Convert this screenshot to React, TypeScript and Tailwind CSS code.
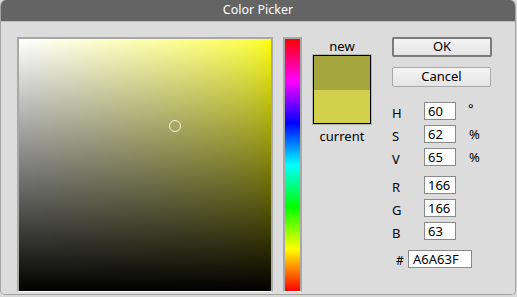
import React from "react";

const font = { fontFamily: '"Noto Sans", "Open Sans", sans-serif' };

function Field({ label, value, unit, unitClass }: { label: string; value: string; unit?: string; unitClass?: string }) {
  return (
    <div className="flex h-[18px] items-start">
      <div className="w-[32px] pt-[2px] text-[13px] leading-[18px] text-black">{label}</div>
      <div className="h-[18px] w-[32px] border border-[#8a8a8a] bg-white pl-[3px] text-[13px] leading-[16px] text-black">
        {value}
      </div>
      {unit && <div className={"ml-[12px] text-[13px] text-black " + (unitClass ?? "")}>{unit}</div>}
    </div>
  );
}

export default function App() {
  return (
    <div className="h-[297px] w-[517px] bg-[#d8d8d8]" style={font}>
      <div className="flex h-[295px] w-[516px] flex-col overflow-hidden rounded-t-[6px] rounded-b-[5px] border-x border-b border-[#a2a2a2]">
        <div className="flex h-[21px] shrink-0 items-center justify-center bg-[#646464] text-[12.5px] text-white">
          Color Picker
        </div>
        <div className="flex flex-1 border-t border-[#bdbdbd] bg-[#dcdcdc] pl-[16px] pt-[15px]">
          {/* saturation / value square */}
          <div className="h-[255px] w-[256px] border-x-2 border-t-2 border-b border-[#a8a8a8] border-b-white">
            <div className="relative h-[252px] w-[252px] bg-gradient-to-r from-white to-[#ffff00]">
              <div className="absolute inset-0 bg-gradient-to-b from-transparent to-black" />
              <div className="absolute left-[150px] top-[81px] h-[12px] w-[12px] rounded-full border-[1.5px] border-[#f4f4e0]" />
            </div>
          </div>
          {/* hue bar */}
          <div className="ml-[10px] h-[255px] w-[19px] border-x-2 border-t-2 border-b border-[#a8a8a8] border-b-white">
            <div className="h-[252px] w-[15px] bg-[linear-gradient(to_bottom,#ff0000,#ff00ff,#0000ff,#00ffff,#00ff00,#ffff00,#ff0000)]" />
          </div>
          {/* preview */}
          <div className="ml-[11px] flex w-[58px] flex-col items-center">
            <div className="h-[18px] text-[13px] leading-[18px] text-black">new</div>
            <div className="flex h-[69px] w-[58px] flex-col border border-black outline outline-1 outline-[#b4b4b4]">
              <div className="h-[34px] bg-[#a6a63f]" />
              <div className="flex-1 bg-[#d2d04c]" />
            </div>
            <div className="mt-[3px] text-[13px] leading-[18px] text-black">current</div>
          </div>
          {/* controls */}
          <div className="ml-[21px] flex flex-col">
            <div className="flex h-[20px] w-[100px] items-center justify-center rounded-[2px] border-2 border-[#7a7a7a] bg-gradient-to-b from-[#f4f4f4] to-[#e4e4e4] text-[13px] text-black">
              OK
            </div>
            <div className="mt-[10px] flex h-[20px] w-[99px] items-center justify-center rounded-[2px] border border-[#a8a8a8] bg-gradient-to-b from-[#f4f4f4] to-[#e4e4e4] text-[13px] text-black">
              Cancel
            </div>
            <div className="mt-[15px] flex flex-col gap-[5px]">
              <Field label="H" value="60" unit="°" unitClass="leading-[16px] -mt-[2px]" />
              <Field label="S" value="62" unit="%" unitClass="leading-[16px] mt-[1px] ml-[13px]" />
              <Field label="V" value="65" unit="%" unitClass="leading-[16px] mt-[1px] ml-[13px]" />
            </div>
            <div className="mt-[10px] flex flex-col gap-[5px]">
              <Field label="R" value="166" />
              <Field label="G" value="166" />
              <Field label="B" value="63" />
            </div>
            <div className="mt-[10px] flex h-[18px] items-start">
              <div className="ml-[4px] w-[12px] pt-[2px] text-[12px] leading-[18px] text-black">#</div>
              <div className="h-[18px] w-[64px] border border-[#8a8a8a] bg-white pl-[4px] text-[13px] leading-[16px] text-black">
                A6A63F
              </div>
            </div>
          </div>
        </div>
      </div>
    </div>
  );
}
